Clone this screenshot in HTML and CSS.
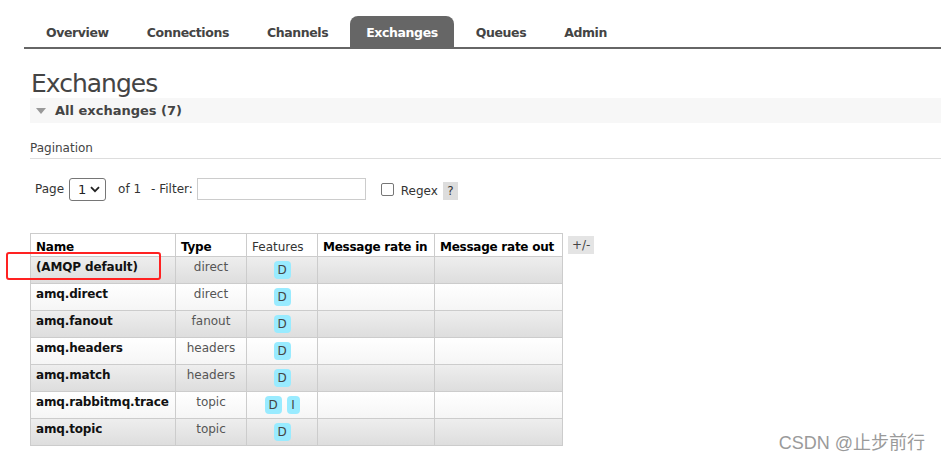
FILE: index.html
```html
<!DOCTYPE html>
<html>
<head>
<meta charset="utf-8">
<link rel="stylesheet" href="styles.css">
</head>
<body>
<div class="page">
  <nav class="tabs">
    <span class="tab">Overview</span>
    <span class="tab">Connections</span>
    <span class="tab">Channels</span>
    <span class="tab active">Exchanges</span>
    <span class="tab">Queues</span>
    <span class="tab">Admin</span>
  </nav>
  <main class="main">
    <h1 class="title">Exchanges</h1>
    <div class="section-head"><span class="tri"></span>All exchanges (7)</div>
    <div class="pagination-label">Pagination</div>
    <div class="controls">
      <span>Page</span>
      <span class="select">1<svg width="10" height="7" viewBox="0 0 10 7"><path d="M1 1.2 L5 5.2 L9 1.2" fill="none" stroke="#222" stroke-width="1.8"/></svg></span>
      <span class="of">of 1</span>
      <span>- Filter:</span>
      <span class="input"></span>
      <span class="checkbox"></span>
      <span class="regex">Regex</span>
      <span class="help">?</span>
    </div>
    <div class="table-wrap">
      <table class="list">
        <thead>
          <tr>
            <th class="c-name">Name</th>
            <th class="c-type">Type</th>
            <th class="c-feat">Features</th>
            <th class="c-in">Message rate in</th>
            <th class="c-out">Message rate out</th>
          </tr>
        </thead>
        <tbody>
          <tr class="alt1"><td class="name">(AMQP default)</td><td class="type">direct</td><td class="feat"><span class="badge">D</span></td><td></td><td></td></tr>
          <tr class="alt2"><td class="name">amq.direct</td><td class="type">direct</td><td class="feat"><span class="badge">D</span></td><td></td><td></td></tr>
          <tr class="alt1"><td class="name">amq.fanout</td><td class="type">fanout</td><td class="feat"><span class="badge">D</span></td><td></td><td></td></tr>
          <tr class="alt2"><td class="name">amq.headers</td><td class="type">headers</td><td class="feat"><span class="badge">D</span></td><td></td><td></td></tr>
          <tr class="alt1"><td class="name">amq.match</td><td class="type">headers</td><td class="feat"><span class="badge">D</span></td><td></td><td></td></tr>
          <tr class="alt2"><td class="name">amq.rabbitmq.trace</td><td class="type">topic</td><td class="feat"><span class="badge">D</span><span class="badge i">I</span></td><td></td><td></td></tr>
          <tr class="alt1"><td class="name">amq.topic</td><td class="type">topic</td><td class="feat"><span class="badge">D</span></td><td></td><td></td></tr>
        </tbody>
      </table>
      <span class="plusminus">+/-</span>
      <div class="annot"></div>
    </div>
  </main>
  <div class="watermark">CSDN @止步前行</div>
</div>
</body>
</html>
```

FILE: styles.css
```css
* { box-sizing: border-box; }
html, body { margin: 0; padding: 0; background: #fff; }
body {
  font-family: "DejaVu Sans", Verdana, sans-serif;
  color: #444;
  font-size: 12px;
  width: 941px;
  height: 463px;
  overflow: hidden;
}
.page { position: relative; height: 463px; padding-top: 16px; }

.tabs {
  display: flex;
  gap: 6px;
  margin-left: 24px;
  padding-left: 6px;
  border-bottom: 2px solid #666;
  height: 33px;
}
.tab {
  display: flex;
  align-items: center;
  padding: 2px 16px 0;
  height: 31px;
  font-weight: bold;
  font-size: 12.5px;
  letter-spacing: -0.4px;
  color: #444;
  border-radius: 8px 8px 0 0;
}
.tab.active { background: #666; color: #fff; }

.main { padding-left: 30px; }
.title {
  margin: 20px 0 0 1px;
  font-size: 25px;
  font-weight: normal;
  color: #444;
  line-height: 30px;
  height: 29px;
  letter-spacing: -1px;
}
.section-head {
  display: flex;
  align-items: center;
  height: 25px;
  background: #f7f7f7;
  font-weight: bold;
  font-size: 13px;
  color: #444;
  padding-left: 6px;
}
.tri {
  width: 0; height: 0;
  border-left: 5px solid transparent;
  border-right: 5px solid transparent;
  border-top: 6px solid #999;
  margin-right: 9px;
}
.pagination-label {
  margin-top: 18px;
  padding-bottom: 2px;
  border-bottom: 1px solid #ddd;
  font-size: 12px;
  line-height: 15px;
  color: #444;
}
.controls {
  display: flex;
  align-items: center;
  height: 22px;
  margin-top: 19px;
  padding-left: 5px;
  font-size: 12px;
  color: #333;
}
.select {
  display: flex;
  align-items: center;
  justify-content: space-between;
  width: 37px;
  height: 23px;
  margin-left: 5px;
  padding: 0 5px 0 8px;
  border: 1px solid #767676;
  border-radius: 3px;
  font-size: 13px;
  color: #222;
}
.of { margin-left: 12px; margin-right: 10px; }
.input {
  width: 169px;
  height: 22px;
  margin-left: 4px;
  border: 1px solid #ccc;
}
.checkbox {
  width: 13px; height: 13px;
  margin-left: 15px;
  border: 1px solid #767676;
  border-radius: 2px;
}
.regex { margin-left: 7px; margin-top: 4px; }
.help {
  margin-left: 5px;
  margin-top: 4px;
  width: 15px; height: 18px;
  background: #ddd;
  text-align: center;
  line-height: 18px;
}

.table-wrap {
  position: relative;
  display: flex;
  align-items: flex-start;
  margin-top: 33px;
}
.list {
  border-collapse: collapse;
  font-size: 12px;
  border: 1px solid #ccc;
  table-layout: fixed;
  width: 532px;
}
.list th, .list td { border: 1px solid #ccc; }
.list th {
  height: 23px;
  padding: 3px 5px 0;
  text-align: left;
  font-weight: bold;
  color: #000;
  background: #fff;
  white-space: nowrap;
  letter-spacing: -0.25px;
}
.list th.c-feat { font-weight: normal; color: #333; letter-spacing: 0; }
.c-name { width: 145px; }
.c-type { width: 71px; }
.c-feat { width: 71px; }
.c-in { width: 117px; }
.c-out { width: 128px; }
.list td {
  height: 27px;
  padding: 0 5px 6px;
  vertical-align: middle;
}
.list td.name { font-weight: bold; color: #111; white-space: nowrap; letter-spacing: -0.15px; }
.list td.type { text-align: center; color: #555; }
.list td.feat { text-align: center; padding: 0 2px; white-space: nowrap; }
.alt1 { background: linear-gradient(#eee, #ddd); }
.alt2 { background: linear-gradient(#fff, #f5f5f5); }
.badge {
  display: inline-block;
  vertical-align: middle;
  min-width: 17px;
  height: 18px;
  line-height: 18px;
  padding: 0 2px;
  background: #99ebff;
  border-radius: 4px;
  color: #444;
  font-size: 12px;
  text-align: center;
}
.badge.i { min-width: 13px; margin-left: 5px; }
.plusminus {
  margin-left: 5px;
  margin-top: 3px;
  padding: 0 4px;
  height: 18px;
  line-height: 18px;
  background: #e4e4e4;
  color: #444;
  font-size: 12px;
}
.annot {
  position: absolute;
  left: -24px;
  top: 19px;
  width: 155px;
  height: 28px;
  border: 2px solid #f22;
  border-radius: 3px;
}
.watermark {
  position: absolute;
  right: 16px;
  bottom: 10px;
  font-family: "Liberation Sans", "Noto Sans CJK SC", sans-serif;
  font-size: 18px;
  line-height: 20px;
  color: #9a9a9a;
}
```
